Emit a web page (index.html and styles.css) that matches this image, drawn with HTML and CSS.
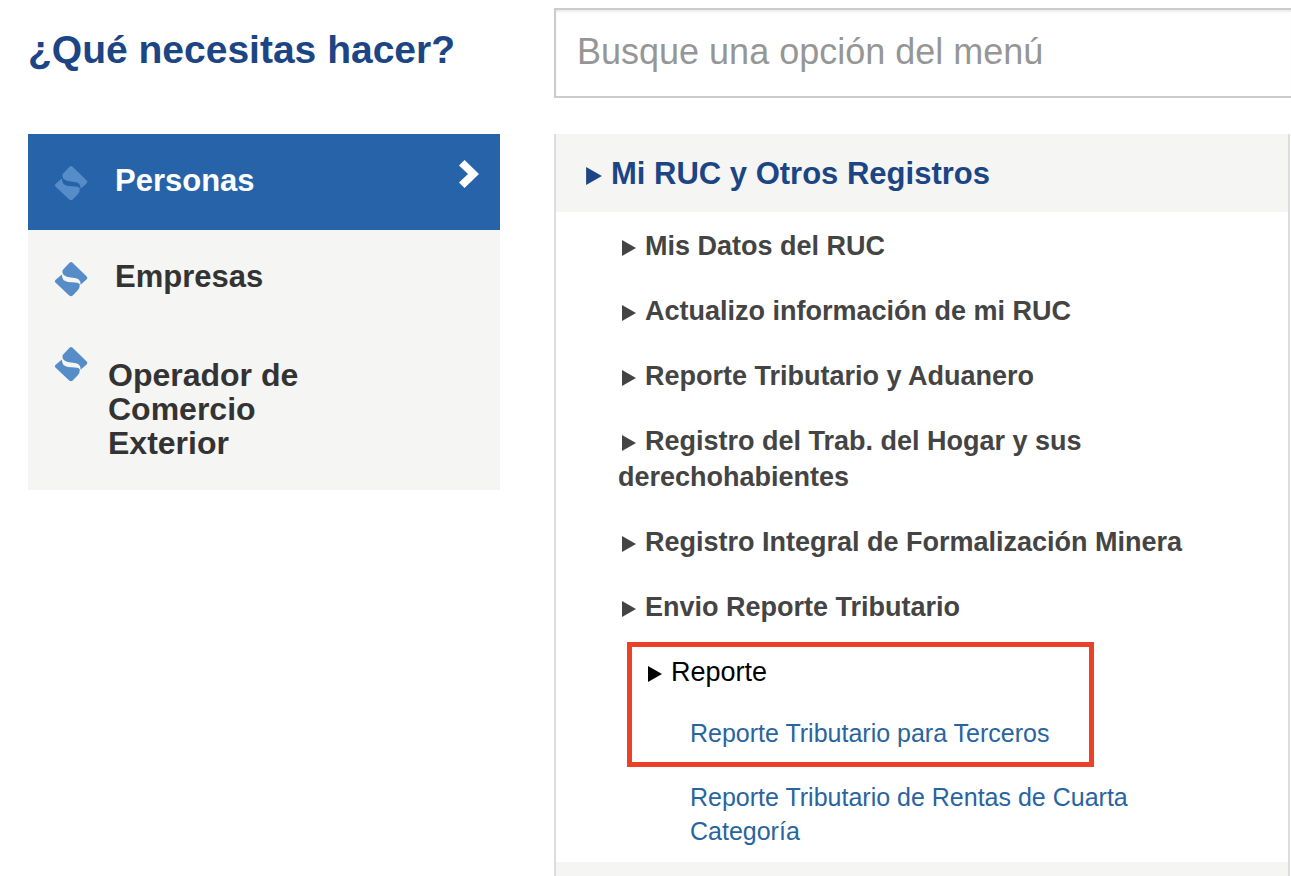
FILE: index.html
```html
<!DOCTYPE html>
<html lang="es">
<head>
<meta charset="utf-8">
<meta name="viewport" content="width=device-width, initial-scale=1">
<title>¿Qué necesitas hacer?</title>
<link rel="stylesheet" href="styles.css">
</head>
<body>
<svg class="sprite" aria-hidden="true">
  <symbol id="logo" viewBox="0 0 34 36">
    <path d="M8.4 10 Q8.6 9 9.6 8 L15.5 1.8 Q17 0.2 18.6 1.8 L32.7 15.6 Q34 17 32.8 18.2 L26.6 23.8 Q26.8 18.2 22 17.2 L13.8 15.9 Q8 14.6 8.4 10Z"/>
    <path d="M7.9 13.4 L1.4 19 Q0.2 20.2 1.4 21.5 L15.2 34.6 Q17 36 18.7 34.6 L24 29 Q25.8 27 25.8 23.4 Q25 21.8 21 21.5 L14 20.9 Q7.6 19.8 7.9 13.4Z"/>
  </symbol>
  <symbol id="arrow" viewBox="0 0 14 16"><path d="M0 0 L14 8 L0 16Z"/></symbol>
</svg>
<main class="page">
  <h1 class="title"><label for="search">¿Qué necesitas hacer?</label></h1>
  <input class="search" id="search" type="text" placeholder="Busque una opción del menú">

  <nav class="profiles" aria-label="Perfiles">
    <button class="profile profile-active" type="button">
      <svg class="logo" aria-hidden="true"><use href="#logo"/></svg>
      <span class="profile-name">Personas</span>
      <svg class="chevron" viewBox="0 0 20 28" aria-hidden="true"><path d="M5.5 0 L20 14 L5.5 28 L0 22.5 L9 14 L0 5.5Z"/></svg>
    </button>
    <button class="profile" type="button">
      <svg class="logo" aria-hidden="true"><use href="#logo"/></svg>
      <span class="profile-name">Empresas</span>
    </button>
    <button class="profile profile-tall" type="button">
      <svg class="logo" aria-hidden="true"><use href="#logo"/></svg>
      <span class="profile-name">Operador de Comercio Exterior</span>
    </button>
  </nav>

  <section class="menu">
    <h2 class="menu-head"><button class="toggle" type="button"><svg class="arrow arrow-head" aria-hidden="true"><use href="#arrow"/></svg>Mi RUC y Otros Registros</button></h2>
    <div class="menu-body">
      <ul class="options">
        <li><button class="toggle" type="button"><svg class="arrow" aria-hidden="true"><use href="#arrow"/></svg>Mis Datos del RUC</button></li>
        <li><button class="toggle" type="button"><svg class="arrow" aria-hidden="true"><use href="#arrow"/></svg>Actualizo información de mi RUC</button></li>
        <li><button class="toggle" type="button"><svg class="arrow" aria-hidden="true"><use href="#arrow"/></svg>Reporte Tributario y Aduanero</button></li>
        <li><button class="toggle" type="button"><svg class="arrow" aria-hidden="true"><use href="#arrow"/></svg>Registro del Trab. del Hogar y sus derechohabientes</button></li>
        <li><button class="toggle" type="button"><svg class="arrow" aria-hidden="true"><use href="#arrow"/></svg>Registro Integral de Formalización Minera</button></li>
        <li><button class="toggle" type="button"><svg class="arrow" aria-hidden="true"><use href="#arrow"/></svg>Envio Reporte Tributario</button></li>
      </ul>
      <div class="highlight">
        <button class="toggle report" type="button"><svg class="arrow" aria-hidden="true"><use href="#arrow"/></svg>Reporte</button>
        <a class="link" href="#terceros">Reporte Tributario para Terceros</a>
      </div>
      <a class="link link-below" href="#cuarta">Reporte Tributario de Rentas de Cuarta Categoría</a>
    </div>
    <div class="menu-next"></div>
  </section>
</main>
</body>
</html>
```
FILE: styles.css
```css
* {
  box-sizing: border-box;
}

body {
  margin: 0;
  overflow-x: hidden;
  background: #fff;
  font-family: "Liberation Sans", Arial, sans-serif;
}

button {
  border: 0;
  padding: 0;
  background: none;
  color: inherit;
  font: inherit;
  text-align: left;
  cursor: pointer;
}

.sprite {
  display: none;
}

.page {
  display: grid;
  grid-template-columns: minmax(0, 472fr) minmax(0, 736fr);
  grid-template-rows: auto 1fr;
  gap: 36px 54px;
  min-height: 100vh;
  padding: 8px 1px 0 28px;
}

.title {
  margin: 0;
  color: #1b4584;
  font-size: 39px;
  line-height: 84px;
  font-weight: bold;
}

.search {
  width: calc(100% + 4px);
  height: 90px;
  padding: 0 21px 2px;
  border: 2px solid #ccc;
  border-radius: 0;
  box-shadow: inset 0 2px 2px rgba(0, 0, 0, 0.08);
  background: #fff;
  color: #333;
  font-family: inherit;
  font-size: 36px;
}

.search::placeholder {
  color: #969696;
  opacity: 1;
}

.profiles {
  align-self: start;
  background: #f5f5f3;
}

.profile {
  display: flex;
  align-items: center;
  gap: 27px;
  width: 100%;
  height: 96px;
  padding: 2px 21px 0 26px;
  color: #333;
  font-size: 31px;
  line-height: 34px;
  font-weight: bold;
}

.profile-active {
  background: #2763a9;
  color: #fff;
}

.profile-name {
  padding-bottom: 4px;
}

.profile-tall {
  align-items: flex-start;
  gap: 20px;
  height: auto;
  padding-top: 20px;
  padding-bottom: 26px;
  font-size: 32px;
}

.profile-tall .profile-name {
  max-width: 232px;
  padding-top: 12px;
}

.logo {
  flex: none;
  width: 34px;
  height: 36px;
  fill: #568dc8;
}

.chevron {
  width: 20px;
  height: 28px;
  margin: 0 0 18px auto;
  fill: #fff;
}

.menu {
  display: flex;
  flex-direction: column;
  border: solid #ddd;
  border-width: 0 2px;
}

.menu-head {
  margin: 0;
  padding: 22px 28px 20px;
  background: #f5f5f3;
  color: #1b4584;
  font-size: 31px;
  line-height: 36px;
}

.menu-body {
  padding: 16px 48px 14px 62px;
}

.options {
  display: grid;
  gap: 29px;
  margin: 0;
  padding: 0;
  list-style: none;
  color: #444;
  font-size: 27px;
  line-height: 36px;
  font-weight: bold;
}

.toggle {
  display: block;
}

.arrow {
  width: 14px;
  height: 16px;
  margin: 0 9px 0 4px;
  vertical-align: -1px;
  fill: currentColor;
}

.arrow-head {
  width: 16px;
  height: 18px;
  margin: 0 9px 0 2px;
}

.highlight {
  width: fit-content;
  margin: 17px 0 13px 9px;
  padding: 7px 40px 12px 12px;
  border: 5px solid #ed4028;
}

.report {
  margin-bottom: 26px;
  color: #000;
  font-size: 27px;
  line-height: 36px;
}

.link {
  display: block;
  margin-left: 46px;
  color: #28649f;
  font-size: 25px;
  line-height: 34px;
  text-decoration: none;
}

.link-below {
  margin-left: 72px;
}

.menu-next {
  flex: 1;
  min-height: 14px;
  background: #f5f5f3;
}
```
